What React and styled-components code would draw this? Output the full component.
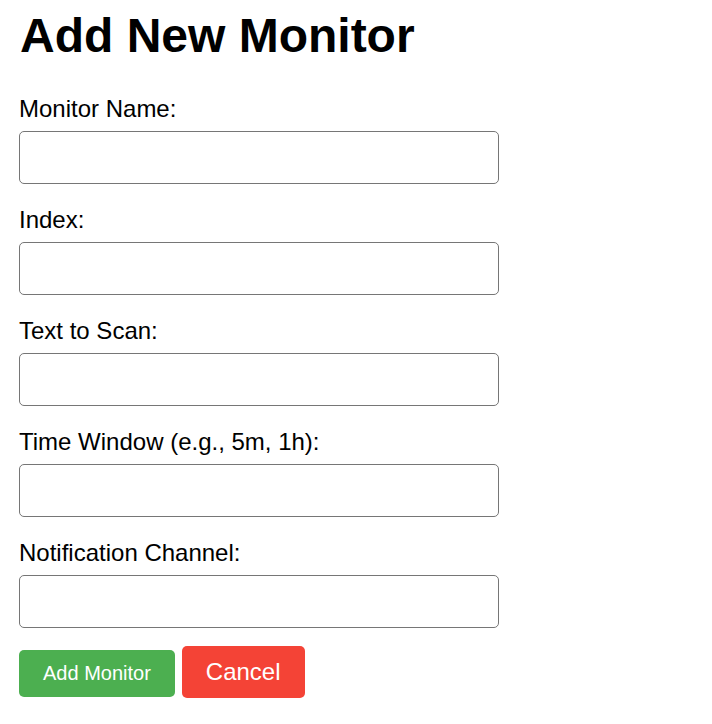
import React, { useState } from 'react';
import styled, { createGlobalStyle } from 'styled-components';

const GlobalStyle = createGlobalStyle`
  body {
    margin: 0;
    background: #fff;
    font-family: "Liberation Sans", Arial, sans-serif;
  }
`;

const Page = styled.div`
  padding: 8px 20px 20px 19px;
`;

const Title = styled.h1`
  margin: 0 0 32px 1px;
  font-size: 48px;
  font-weight: bold;
  color: #000;
`;

const Form = styled.form`
  display: flex;
  flex-direction: column;
  width: 480px;
`;

const Field = styled.div`
  display: flex;
  flex-direction: column;
  margin-bottom: ${p => (p.$last ? '18px' : '22px')};
`;

const Label = styled.label`
  font-size: 24px;
  line-height: 27px;
  color: #000;
  margin-bottom: 9px;
`;

const Input = styled.input`
  box-sizing: border-box;
  width: 100%;
  height: 53px;
  padding: 10px 12px;
  border: 1px solid #767676;
  border-radius: 5px;
  font-family: inherit;
  font-size: 20px;
  background: #fff;
`;

const Actions = styled.div`
  display: flex;
  align-items: baseline;
  gap: 7px;
`;

const Button = styled.button`
  padding: 12px 24px;
  border: none;
  border-radius: 5px;
  color: #fff;
  font-family: inherit;
  font-size: ${p => (p.$large ? '24px' : '20px')};
  background: ${p => (p.$variant === 'danger' ? '#f44336' : '#4caf50')};
  cursor: pointer;
`;

const fields = [
  { name: 'name', label: 'Monitor Name:' },
  { name: 'index', label: 'Index:' },
  { name: 'text', label: 'Text to Scan:' },
  { name: 'window', label: 'Time Window (e.g., 5m, 1h):' },
  { name: 'channel', label: 'Notification Channel:' },
];

export default function App() {
  const [values, setValues] = useState({});

  const handleChange = e => {
    setValues({ ...values, [e.target.name]: e.target.value });
  };

  return (
    <Page>
      <GlobalStyle />
      <Title>Add New Monitor</Title>
      <Form onSubmit={e => e.preventDefault()}>
        {fields.map((f, i) => (
          <Field key={f.name} $last={i === fields.length - 1}>
            <Label htmlFor={f.name}>{f.label}</Label>
            <Input
              id={f.name}
              name={f.name}
              value={values[f.name] || ''}
              onChange={handleChange}
            />
          </Field>
        ))}
        <Actions>
          <Button type="submit">Add Monitor</Button>
          <Button type="button" $variant="danger" $large>
            Cancel
          </Button>
        </Actions>
      </Form>
    </Page>
  );
}
